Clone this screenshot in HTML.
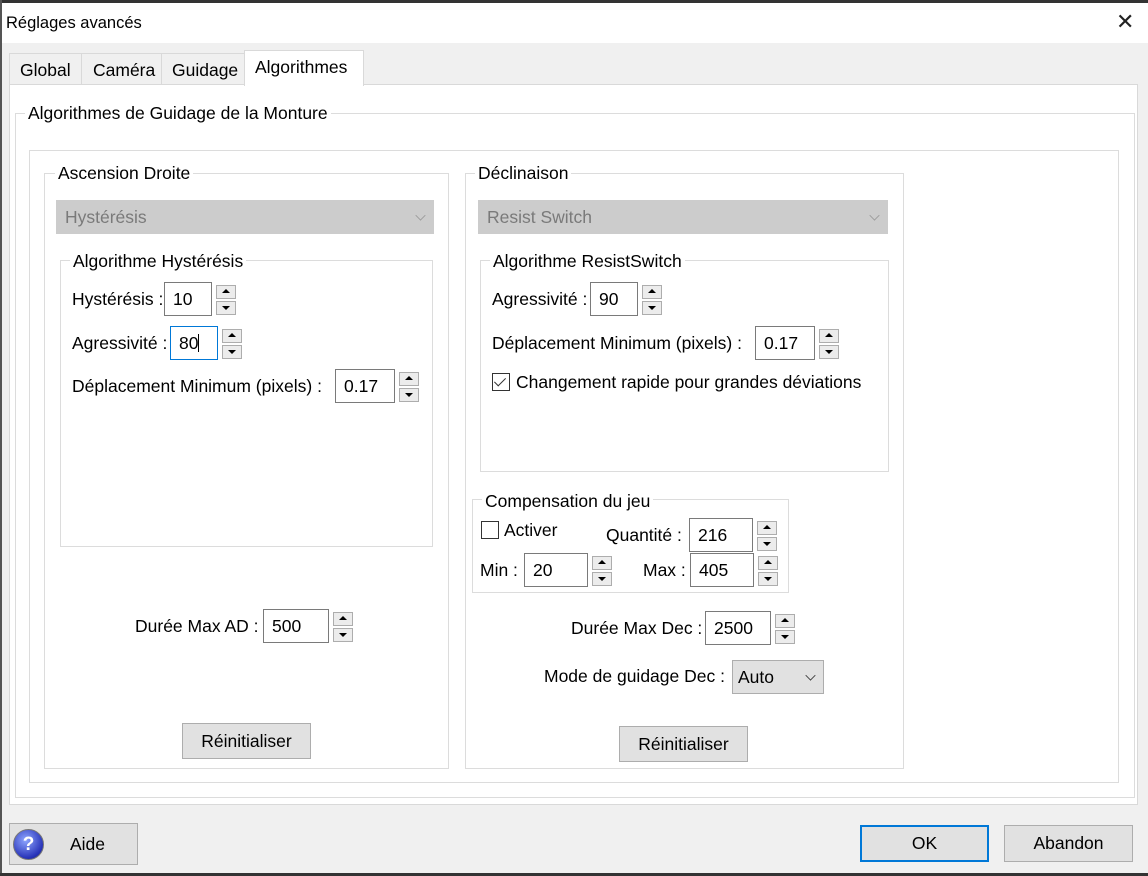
<!DOCTYPE html>
<html><head><meta charset="utf-8"><style>
*{box-sizing:border-box;margin:0;padding:0}
body{width:1148px;height:876px;position:relative;background:#f0f0f0;font-family:"Liberation Sans",sans-serif;font-size:17.5px;color:#000;overflow:hidden}
.a{position:absolute}
.t{position:absolute;white-space:nowrap;line-height:22px}
.gb{position:absolute;border:1px solid #dcdcdc}
.lg{position:absolute;background:#fff;padding:0 3px;white-space:nowrap;line-height:22px}
.in{position:absolute;background:#fff;border:1px solid #7a7a7a;padding-left:8px;line-height:32px;height:34px}
.sp{position:absolute;width:20px;height:30px}
.sp div{position:absolute;left:0;width:20px;height:14px;background:#ececec;border:1px solid #adadad}
.sp div:first-child{top:0}.sp div:last-child{top:16px}
.sp div:after{content:"";position:absolute;left:5px;border-left:4px solid transparent;border-right:4px solid transparent}
.sp div:first-child:after{top:3px;border-bottom:4px solid #000}
.sp div:last-child:after{top:4px;border-top:4px solid #000}
.btn{position:absolute;background:#e1e1e1;border:1px solid #adadad;text-align:center;line-height:34px}
.cb{position:absolute;background:#ccc;border:1px solid #ccc;color:#7a7a7a;padding-left:8px;line-height:32px;height:34px}
.chev{position:absolute;right:8px;top:10px;width:9px;height:9px;border-right:1px solid #999;border-bottom:1px solid #999;transform:rotate(45deg) scale(.8)}
</style></head><body>
<div class="a" style="left:0;top:0;width:1148px;height:3px;background:#333"></div>
<div class="a" style="left:0;top:0;width:2px;height:876px;background:#555"></div>
<div class="a" style="left:0;top:873px;width:1148px;height:3px;background:#333"></div>
<div class="a" style="left:2px;top:3px;width:1146px;height:40px;background:#fff"></div>
<div class="t" style="left:6px;top:12px;font-size:16.5px">Réglages avancés</div>
<div class="t" style="left:1116px;top:11px;font-size:22px;font-weight:300;color:#222">✕</div>

<!-- tabs -->
<div class="a" style="left:9px;top:53px;width:73px;height:32px;background:#f0f0f0;border:1px solid #d9d9d9"></div>
<div class="t" style="left:20px;top:59px">Global</div>
<div class="a" style="left:81px;top:53px;width:81px;height:32px;background:#f0f0f0;border:1px solid #d9d9d9"></div>
<div class="t" style="left:93px;top:59px">Caméra</div>
<div class="a" style="left:161px;top:53px;width:84px;height:32px;background:#f0f0f0;border:1px solid #d9d9d9"></div>
<div class="t" style="left:172px;top:59px">Guidage</div>
<div class="a" style="left:9px;top:84px;width:1129px;height:721px;background:#fff;border:1px solid #d9d9d9"></div>
<div class="a" style="left:244px;top:50px;width:120px;height:36px;background:#fff;border:1px solid #d9d9d9;border-bottom:none"></div>
<div class="t" style="left:255px;top:56px">Algorithmes</div>

<div class="gb" style="left:15px;top:113px;width:1120px;height:685px"></div>
<div class="lg" style="left:25px;top:102px">Algorithmes de Guidage de la Monture</div>
<div class="gb" style="left:29px;top:150px;width:1090px;height:633px"></div>

<!-- RA -->
<div class="gb" style="left:44px;top:173px;width:405px;height:596px"></div>
<div class="lg" style="left:55px;top:162px">Ascension Droite</div>
<div class="cb" style="left:56px;top:200px;width:378px">Hystérésis<div class="chev"></div></div>
<div class="gb" style="left:60px;top:260px;width:373px;height:287px"></div>
<div class="lg" style="left:70px;top:250px">Algorithme Hystérésis</div>
<div class="t" style="left:72px;top:288px">Hystérésis :</div>
<div class="in" style="left:164px;top:282px;width:48px">10</div>
<div class="sp" style="left:216px;top:285px"><div></div><div></div></div>
<div class="t" style="left:72px;top:332px">Agressivité :</div>
<div class="in" style="left:170px;top:326px;width:48px;border-color:#0078d7">80<span style="display:inline-block;width:1px;height:18px;background:#000;vertical-align:-3px"></span></div>
<div class="sp" style="left:222px;top:329px"><div></div><div></div></div>
<div class="t" style="left:72px;top:375px">Déplacement Minimum (pixels) :</div>
<div class="in" style="left:335px;top:369px;width:60px">0.17</div>
<div class="sp" style="left:399px;top:372px"><div></div><div></div></div>
<div class="t" style="left:135px;top:615px">Durée Max AD :</div>
<div class="in" style="left:263px;top:609px;width:66px">500</div>
<div class="sp" style="left:333px;top:612px"><div></div><div></div></div>
<div class="btn" style="left:182px;top:723px;width:129px;height:36px">Réinitialiser</div>

<!-- Dec -->
<div class="gb" style="left:465px;top:173px;width:439px;height:596px"></div>
<div class="lg" style="left:475px;top:162px">Déclinaison</div>
<div class="cb" style="left:478px;top:200px;width:410px">Resist Switch<div class="chev"></div></div>
<div class="gb" style="left:480px;top:260px;width:409px;height:212px"></div>
<div class="lg" style="left:490px;top:250px">Algorithme ResistSwitch</div>
<div class="t" style="left:492px;top:288px">Agressivité :</div>
<div class="in" style="left:590px;top:282px;width:48px">90</div>
<div class="sp" style="left:642px;top:285px"><div></div><div></div></div>
<div class="t" style="left:492px;top:332px">Déplacement Minimum (pixels) :</div>
<div class="in" style="left:755px;top:326px;width:60px">0.17</div>
<div class="sp" style="left:819px;top:329px"><div></div><div></div></div>
<div class="a" style="left:492px;top:373px;width:18px;height:18px;border:1px solid #333;background:#fff"></div>
<div class="a" style="left:497px;top:375px;width:6px;height:11px;border-right:1.5px solid #333;border-bottom:1.5px solid #333;transform:rotate(45deg)"></div>
<div class="t" style="left:516px;top:371px">Changement rapide pour grandes déviations</div>

<div class="gb" style="left:472px;top:499px;width:317px;height:94px"></div>
<div class="lg" style="left:482px;top:490px">Compensation du jeu</div>
<div class="a" style="left:481px;top:521px;width:18px;height:18px;border:1px solid #333;background:#fff"></div>
<div class="t" style="left:504px;top:519px">Activer</div>
<div class="t" style="left:606px;top:524px">Quantité :</div>
<div class="in" style="left:689px;top:518px;width:64px">216</div>
<div class="sp" style="left:757px;top:521px"><div></div><div></div></div>
<div class="t" style="left:480px;top:559px">Min :</div>
<div class="in" style="left:524px;top:553px;width:64px">20</div>
<div class="sp" style="left:592px;top:556px"><div></div><div></div></div>
<div class="t" style="left:643px;top:559px">Max :</div>
<div class="in" style="left:690px;top:553px;width:64px">405</div>
<div class="sp" style="left:758px;top:556px"><div></div><div></div></div>
<div class="t" style="left:571px;top:617px">Durée Max Dec :</div>
<div class="in" style="left:705px;top:611px;width:66px">2500</div>
<div class="sp" style="left:775px;top:614px"><div></div><div></div></div>
<div class="t" style="left:544px;top:665px">Mode de guidage Dec :</div>
<div class="a" style="left:732px;top:660px;width:92px;height:34px;background:#e1e1e1;border:1px solid #adadad;line-height:32px;padding-left:5px">Auto<div class="chev" style="border-color:#333"></div></div>
<div class="btn" style="left:619px;top:726px;width:129px;height:36px">Réinitialiser</div>

<!-- bottom -->
<div class="btn" style="left:9px;top:823px;width:129px;height:42px;line-height:40px;padding-left:28px">Aide</div>
<div class="a" style="left:13px;top:829px;width:31px;height:31px;border-radius:50%;background:radial-gradient(circle at 40% 35%,#8fa6ff,#2733b8 70%,#1a1f6a);border:1px solid #777;color:#fff;font-weight:bold;text-align:center;line-height:29px;font-size:19px">?</div>
<div class="a" style="left:860px;top:825px;width:129px;height:37px;background:#e1e1e1;border:2px solid #0078d7;text-align:center;line-height:33px">OK</div>
<div class="btn" style="left:1004px;top:825px;width:129px;height:37px;line-height:35px">Abandon</div>
</body></html>
